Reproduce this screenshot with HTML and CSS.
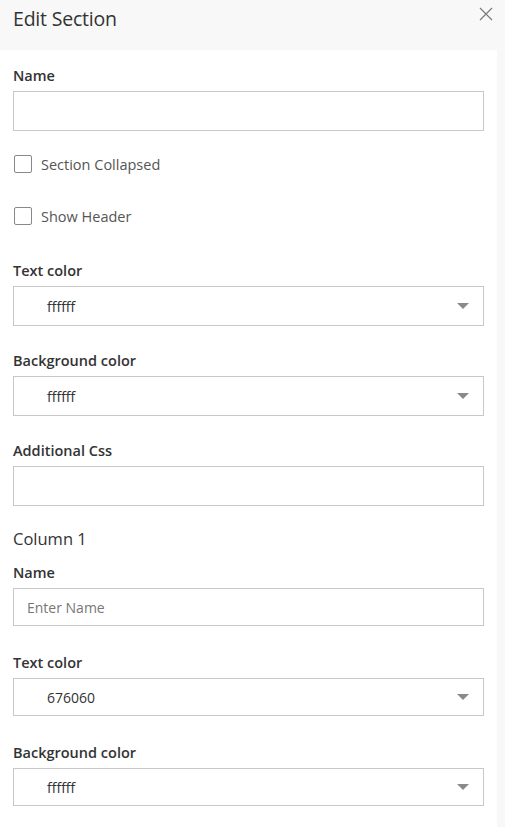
FILE: index.html
```html
<!doctype html>
<html lang="en">
<head>
<meta charset="utf-8">
<title>Edit Section</title>
<link rel="stylesheet" href="styles.css">
</head>
<body>

	<div class="panel">

		<div class="panel-head">
			<h1 class="panel-title">Edit Section</h1>
			<button class="close" title="Close">
				<svg width="14" height="14" viewBox="0 0 14 14"><path d="M1 1 L13 13 M13 1 L1 13" stroke="#7a7a7a" stroke-width="1.2" fill="none"/></svg>
			</button>
		</div>

		<div class="panel-body">

			<div class="field first">
				<label class="label">Name</label>
				<input class="text" type="text">
			</div>

			<label class="check check-first"><span class="box"></span>Section Collapsed</label>
			<label class="check"><span class="box"></span>Show Header</label>

			<div class="field">
				<label class="label">Text color</label>
				<div class="select"><span>ffffff</span><i class="caret"></i></div>
			</div>

			<div class="field">
				<label class="label">Background color</label>
				<div class="select"><span>ffffff</span><i class="caret"></i></div>
			</div>

			<div class="field">
				<label class="label">Additional Css</label>
				<input class="text" type="text">
			</div>

			<h2 class="column-title">Column 1</h2>

			<div class="field first col">
				<label class="label">Name</label>
				<input class="text" type="text" placeholder="Enter Name">
			</div>

			<div class="field col">
				<label class="label">Text color</label>
				<div class="select"><span>676060</span><i class="caret"></i></div>
			</div>

			<div class="field col">
				<label class="label">Background color</label>
				<div class="select"><span>ffffff</span><i class="caret"></i></div>
			</div>

		</div>

	</div>

</body>
</html>
```

FILE: styles.css
```css
body { font: 14px "Open Sans", "Noto Sans", sans-serif; color: #323130; margin: 0; background: #f8f8f8; overflow: hidden; }

.panel { width: 505px; }

.panel-head { display: flex; justify-content: space-between; align-items: flex-start; height: 50px; padding: 0 12px 0 13px; box-sizing: border-box; }
.panel-title { font-size: 19.5px; font-weight: 400; color: #333; margin: 5px 0 0; line-height: 28px; letter-spacing: -0.2px; }
.close { background: none; border: none; padding: 0; margin-top: 7px; cursor: pointer; }

.panel-body { background: #fff; width: 497px; min-height: 800px; padding: 0 13px 20px; box-sizing: border-box; }

.field { display: flex; flex-direction: column; margin-top: 17px; }
.field.first { margin-top: 0; padding-top: 8px; }
.label { font-weight: 600; font-size: 14.5px; line-height: 20px; padding: 8px 0 5px; color: #333; }

.text { height: 40px; box-sizing: border-box; border: 1px solid #c8c8c8; padding: 0 13px; font: inherit; color: #333; outline: none; margin: 0; }
.text::placeholder { color: #777; }

.select { height: 40px; box-sizing: border-box; border: 1px solid #c8c8c8; display: flex; align-items: center; justify-content: space-between; padding: 0 14px 0 33px; color: #333; }
.caret { width: 0; height: 0; border-left: 6px solid transparent; border-right: 6px solid transparent; border-top: 6px solid #8a8a8a; }

.col { margin-top: 19px; }
.col .text, .col .select { height: 38px; }

.check { display: flex; align-items: center; gap: 9px; height: 20px; margin-top: 32px; font-size: 14.5px; color: #555; cursor: pointer; }
.check-first { margin-top: 23px; padding-left: 1px; }
.check + .check { padding-left: 1px; }
.check + .field { margin-top: 27px; }
.box { width: 16px; height: 16px; border: 1px solid #8a8886; border-radius: 2px; }

.column-title { font-size: 16.5px; font-weight: 400; line-height: 24px; margin: 21px 0 0; color: #333; }
.column-title + .field { padding-top: 4px; margin-top: 0; }
```
